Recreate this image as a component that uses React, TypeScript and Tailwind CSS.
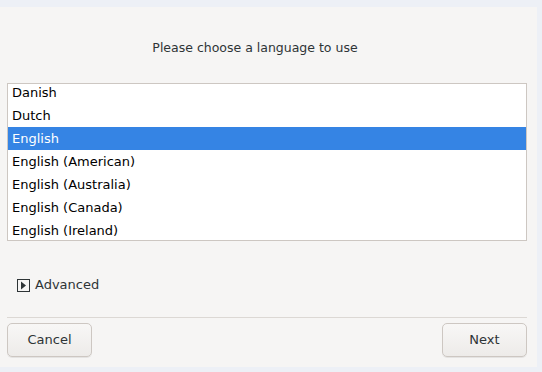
const languages = [
  "Danish",
  "Dutch",
  "English",
  "English (American)",
  "English (Australia)",
  "English (Canada)",
  "English (Ireland)",
];

function ExpanderIcon() {
  return (
    <svg width="13" height="13" viewBox="0 0 13 13" className="shrink-0">
      <rect x="0.5" y="0.5" width="12" height="12" fill="none" stroke="#2e3436" />
      <path d="M4 2.5 L9 6.5 L4 10.5 Z" fill="#2e3436" />
    </svg>
  );
}

function DialogButton({ label }: { label: string }) {
  return (
    <button className="w-[85px] h-[34px] rounded-[5px] border border-[#cdc7c2] bg-gradient-to-b from-[#f8f7f6] to-[#edebe9] text-[13px] text-[#2e3436] shadow-[0_1px_0_rgba(0,0,0,0.07)]">
      {label}
    </button>
  );
}

export default function App() {
  const selected = "English";

  return (
    <div
      className="w-[542px] h-[372px] bg-[#edf0f6] pt-[7px] pr-[5px] pb-[5px]"
      style={{ fontFamily: '"DejaVu Sans", sans-serif' }}
    >
      <div className="h-full bg-[#f6f5f4] flex flex-col pl-[7px] pr-[10px]">
        <div className="pt-[33px] pr-[24px] text-center text-[12.5px] leading-[16px] text-[#2e3436]">
          Please choose a language to use
        </div>

        <div className="mt-[27px] h-[158px] border border-[#cdc7c2] bg-white overflow-hidden">
          <div className="mt-[-3px]">
            {languages.map((lang) => (
              <div
                key={lang}
                className={
                  lang === selected
                    ? "h-[23px] leading-[23px] pl-[4px] text-[13px] bg-[#3584e4] text-white"
                    : "h-[23px] leading-[23px] pl-[4px] text-[13px] text-black"
                }
              >
                {lang}
              </div>
            ))}
          </div>
        </div>

        <div className="mt-[36px] h-[16px] flex items-center gap-[5px] pl-[10px] text-[13px] text-[#2e3436]">
          <ExpanderIcon />
          <span>Advanced</span>
        </div>

        <div className="mt-[24px] h-px bg-[#dcd8d4]" />

        <div className="mt-[5px] flex justify-between">
          <DialogButton label="Cancel" />
          <DialogButton label="Next" />
        </div>
      </div>
    </div>
  );
}
